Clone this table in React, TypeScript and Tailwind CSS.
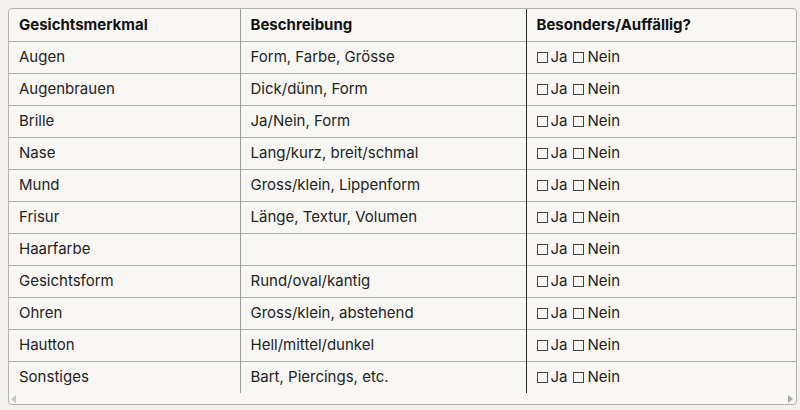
import React from 'react';

const rows: [string, string][] = [
  ['Augen', 'Form, Farbe, Grösse'],
  ['Augenbrauen', 'Dick/dünn, Form'],
  ['Brille', 'Ja/Nein, Form'],
  ['Nase', 'Lang/kurz, breit/schmal'],
  ['Mund', 'Gross/klein, Lippenform'],
  ['Frisur', 'Länge, Textur, Volumen'],
  ['Haarfarbe', ''],
  ['Gesichtsform', 'Rund/oval/kantig'],
  ['Ohren', 'Gross/klein, abstehend'],
  ['Hautton', 'Hell/mittel/dunkel'],
  ['Sonstiges', 'Bart, Piercings, etc.'],
];

const App = () => {
  return (
    <div
      className="w-[800px] h-[410px] bg-[#f3f1ed] p-2"
      style={{ fontFamily: 'Inter, "Liberation Sans", Arial, sans-serif' }}
    >
      <div className="h-[397px] w-[789px] rounded-[4px] border border-[#b3b1ad] bg-[#f8f7f3] overflow-hidden flex flex-col">
        <table className="w-full border-collapse text-[15px] text-[#222]">
          <thead>
            <tr className="h-[32px] border-b border-[#a9a9a9]">
              <th className="w-[231px] text-left font-bold px-[10px] border-r border-[#9a9a9a] text-[#111]">Gesichtsmerkmal</th>
              <th className="w-[286px] text-left font-bold px-[10px] border-r border-[#2a2a2a] text-[#111]">Beschreibung</th>
              <th className="text-left font-bold px-[10px] text-[#111]">Besonders/Auffällig?</th>
            </tr>
          </thead>
          <tbody>
            {rows.map(([name, desc], i) => (
              <tr
                key={name}
                className={i < rows.length - 1 ? 'h-[32px] border-b border-[#a9a9a9]' : 'h-[32px]'}
              >
                <td className="px-[10px] border-r border-[#9a9a9a]">{name}</td>
                <td className="px-[10px] border-r border-[#2a2a2a]">{desc}</td>
                <td className="px-[10px] whitespace-nowrap">
                  <div className="flex items-center">
                    <span className="shrink-0 w-[11px] h-[11px] mt-[1px] border border-[#444] mr-[3px]" />
                    <span className="mr-[5px]">Ja</span>
                    <span className="shrink-0 w-[11px] h-[11px] mt-[1px] border border-[#444] mr-[4px]" />
                    <span>Nein</span>
                  </div>
                </td>
              </tr>
            ))}
          </tbody>
        </table>
        <div className="flex-1 flex items-center justify-between px-[2px]">
          <svg width="6" height="8" viewBox="0 0 6 8">
            <polygon points="5,0 0,4 5,8" fill="#c4c4c4" />
          </svg>
          <svg width="6" height="8" viewBox="0 0 6 8">
            <polygon points="0,0 5,4 0,8" fill="#a8a8a8" />
          </svg>
        </div>
      </div>
    </div>
  );
};

export default App;
